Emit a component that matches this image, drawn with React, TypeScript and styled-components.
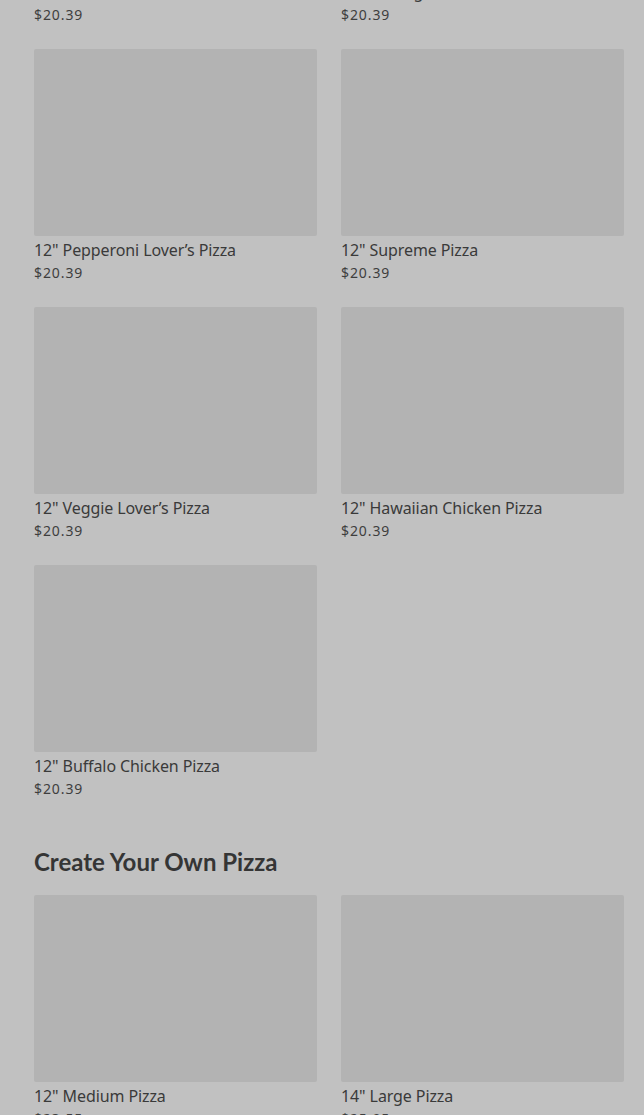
import React from "react";
import styled, { createGlobalStyle } from "styled-components";

const Global = createGlobalStyle`
  html, body { margin: 0; padding: 0; background: #c1c1c1; }
  body { font-family: "Noto Sans", "Open Sans", sans-serif; color: #3a3a3a; overflow: hidden; }
`;

const Page = styled.main`
  padding: 0 20px 0 34px;
  margin-top: -209px;
`;

const Section = styled.section`
  display: flex;
  flex-direction: column;
  margin-bottom: 47px;
`;

const Heading = styled.h2`
  margin: 0 0 17px;
  font-family: "Lato", "Inter", sans-serif;
  font-weight: 700;
  font-size: 24px;
  line-height: 32px;
  letter-spacing: 0;
  color: #353535;
`;

const Grid = styled.div`
  display: grid;
  grid-template-columns: 283px 283px;
  column-gap: 24px;
  row-gap: 24px;
`;

const Card = styled.div`
  display: flex;
  flex-direction: column;
`;

const Photo = styled.div`
  height: 187px;
  background: #b3b3b3;
  border-radius: 2px;
`;

const Title = styled.div`
  margin-top: 2px;
  font-size: 16px;
  line-height: 24px;
  color: #3a3a3a;
  letter-spacing: -0.1px;
`;

const Price = styled.div`
  font-size: 14px;
  line-height: 21px;
  letter-spacing: 0.9px;
  color: #3e3e3e;
`;

type Item = { name: string; price: string };

const specialty: Item[] = [
  { name: '12" Cheese Pizza', price: "$20.39" },
  { name: '12" Sausage Pizza', price: "$20.39" },
  { name: '12" Pepperoni Lover’s Pizza', price: "$20.39" },
  { name: '12" Supreme Pizza', price: "$20.39" },
  { name: '12" Veggie Lover’s Pizza', price: "$20.39" },
  { name: '12" Hawaiian Chicken Pizza', price: "$20.39" },
  { name: '12" Buffalo Chicken Pizza', price: "$20.39" },
];

const own: Item[] = [
  { name: '12" Medium Pizza', price: "$23.55" },
  { name: '14" Large Pizza', price: "$25.95" },
];

const ProductCard = ({ item }: { item: Item }) => (
  <Card>
    <Photo />
    <Title>{item.name}</Title>
    <Price>{item.price}</Price>
  </Card>
);

export default function App() {
  return (
    <>
      <Global />
      <Page>
        <Section>
          <Grid>
            {specialty.map((it) => (
              <ProductCard key={it.name} item={it} />
            ))}
          </Grid>
        </Section>
        <Section>
          <Heading>Create Your Own Pizza</Heading>
          <Grid>
            {own.map((it) => (
              <ProductCard key={it.name} item={it} />
            ))}
          </Grid>
        </Section>
      </Page>
    </>
  );
}
